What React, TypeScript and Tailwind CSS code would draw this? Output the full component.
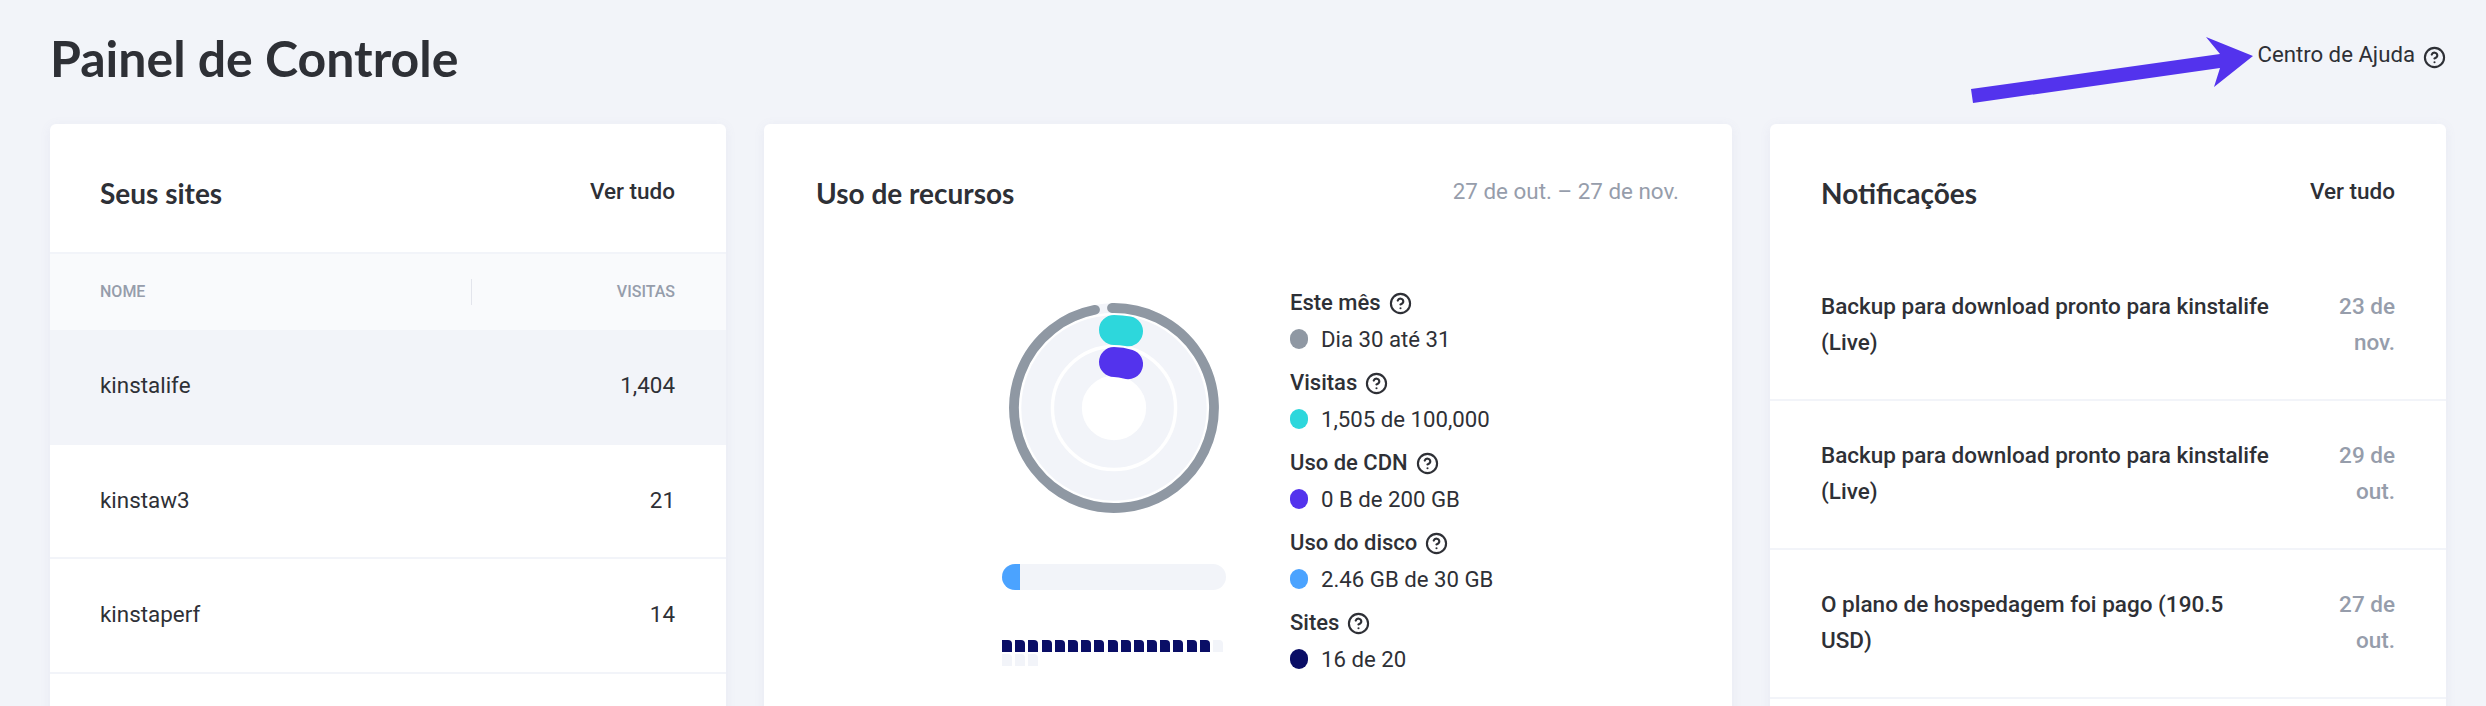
import React from "react";
import { CircleHelp } from "lucide-react";

const sites = [
  { name: "kinstalife", visits: "1,404", active: true },
  { name: "kinstaw3", visits: "21", active: false },
  { name: "kinstaperf", visits: "14", active: false },
];

const legend = [
  { title: "Este mês", value: "Dia 30 até 31", dot: "bg-[#8f98a3]" },
  { title: "Visitas", value: "1,505 de 100,000", dot: "bg-[#2dd7dc]" },
  { title: "Uso de CDN", value: "0 B de 200 GB", dot: "bg-[#5333ed]" },
  { title: "Uso do disco", value: "2.46 GB de 30 GB", dot: "bg-[#4ba3ff]" },
  { title: "Sites", value: "16 de 20", dot: "bg-[#0a0e66]" },
];

const notes = [
  { text: "Backup para download pronto para kinstalife (Live)", date: "23 de nov." },
  { text: "Backup para download pronto para kinstalife (Live)", date: "29 de out." },
  { text: "O plano de hospedagem foi pago (190.5 USD)", date: "27 de out." },
];

const heading = "font-['Lato',sans-serif] font-bold";

function Ring() {
  return (
    <svg width="224" height="224" viewBox="0 0 224 224" className="block">
      <circle cx="112" cy="112" r="100" fill="none" stroke="#f2f4f9" strokeWidth="9.5" />
      <circle cx="112" cy="112" r="78" fill="none" stroke="#f2f4f9" strokeWidth="29.4" />
      <circle cx="112" cy="112" r="46" fill="none" stroke="#f2f4f9" strokeWidth="27.7" />
      <path
        d="M 110 12 A 100 100 0 1 1 93 13.8"
        fill="none"
        stroke="#8f98a3"
        strokeWidth="9.8"
        strokeLinecap="round"
      />
      <path d="M 112 34 A 78 78 0 0 1 126 35.3" fill="none" stroke="#2dd7dc" strokeWidth="30" strokeLinecap="round" />
      <path d="M 112 66 A 46 46 0 0 1 126 68.2" fill="none" stroke="#5333ed" strokeWidth="30" strokeLinecap="round" />
    </svg>
  );
}

function Arrow() {
  return (
    <svg
      width="300"
      height="80"
      viewBox="0 0 300 80"
      className="absolute left-[1965px] top-[30px]"
    >
      <polygon points="6,59 8,73 255,38 249,57 288,26 241,7 255,24" fill="#5333ed" />
    </svg>
  );
}

export default function App() {
  return (
    <div className="relative h-[706px] w-[2486px] overflow-hidden bg-[#f2f4f9] font-['Roboto',sans-serif] text-[#2e3036]">
      <header className="flex h-[124px] items-start justify-between pl-[50px] pr-[40px]">
        <h1 className={`${heading} mt-[25px] text-[50px] leading-[66px] text-[#2e3036]`}>Painel de Controle</h1>
        <a className="mt-[39px] flex items-start gap-[8px] text-[22.2px] leading-[30px]">
          Centro de Ajuda
          <CircleHelp size={23} strokeWidth={2.2} className="mt-[7px]" />
        </a>
      </header>
      <Arrow />

      <main className="flex items-start gap-[38px] pl-[50px]">
        <section className="h-[600px] w-[676px] rounded-md bg-white shadow-[0_2px_12px_rgba(110,120,160,0.08)]">
          <div className="flex h-[128px] items-center justify-between pl-[50px] pr-[51px] pt-[10px]">
            <h2 className={`${heading} text-[28px] leading-9`}>Seus sites</h2>
            <span className="-mt-[2px] text-[22.5px] font-medium">Ver tudo</span>
          </div>
          <div className="flex h-[78px] items-center border-t-2 border-[#f2f4f9] bg-[#f9fafc] pl-[50px] pr-[51px] text-[16px] font-medium text-[#969dab]">
            <span className="w-[371px]">NOME</span>
            <span className="h-[26px] w-px bg-[#e3e5ec]" />
            <span className="ml-auto">VISITAS</span>
          </div>
          {sites.map((s) => (
            <div
              key={s.name}
              className={`flex h-[114.5px] items-center justify-between border-b-2 border-[#f2f4f9] pl-[50px] pr-[51px] text-[22.4px] ${
                s.active ? "bg-[#f2f4f9]" : "bg-white"
              }`}
            >
              <span>{s.name}</span>
              <span>{s.visits}</span>
            </div>
          ))}
        </section>

        <section className="h-[600px] w-[968px] rounded-md bg-white shadow-[0_2px_12px_rgba(110,120,160,0.08)]">
          <div className="flex h-[128px] items-center justify-between pl-[52px] pr-[53px] pt-[10px]">
            <h2 className={`${heading} text-[28px] leading-9`}>Uso de recursos</h2>
            <span className="-mt-[3px] text-[22.4px] text-[#969dab]">27 de out. – 27 de nov.</span>
          </div>
          <div className="flex items-start pl-[238px]">
            <div className="mt-[44px] w-[224px]">
              <Ring />
              <div className="mt-[44px] h-[26px] rounded-full bg-[#f2f4f9]">
                <div className="h-[26px] w-[18px] rounded-l-full rounded-r-[8px] bg-[#4ba3ff]" />
              </div>
              <div className="mt-[50px] flex flex-wrap gap-x-[3.2px] gap-y-[2px]">
                {Array.from({ length: 20 }, (_, i) => (
                  <span
                    key={i}
                    className={`h-[12px] w-[10px] rounded-tr-[4px] ${i < 16 ? "bg-[#0a0e66]" : "bg-[#f2f4f9]"}`}
                  />
                ))}
              </div>
            </div>
            <div className="ml-[64px] mt-[36px]">
              {legend.map((l) => (
                <div key={l.title} className="mb-[14px]">
                  <div className="flex h-[30px] items-center gap-[8px] text-[22px] font-medium leading-[30px]">
                    {l.title}
                    <CircleHelp size={23} strokeWidth={2.2} />
                  </div>
                  <div className="mt-[6px] flex h-[30px] items-center text-[22.2px] leading-[30px]">
                    <span className={`mr-[13px] h-[20px] w-[18px] rounded-full ${l.dot}`} />
                    {l.value}
                  </div>
                </div>
              ))}
            </div>
          </div>
        </section>

        <section className="h-[600px] w-[676px] rounded-md bg-white shadow-[0_2px_12px_rgba(110,120,160,0.08)]">
          <div className="flex h-[128px] items-center justify-between px-[51px] pt-[10px]">
            <h2 className={`${heading} text-[28px] leading-9`}>Notificações</h2>
            <span className="-mt-[2px] text-[22.5px] font-medium">Ver tudo</span>
          </div>
          {notes.map((n, i) => (
            <div
              key={i}
              className="flex items-start justify-between border-b-2 border-[#f2f4f9] px-[51px] pb-[39px] pt-[36px] text-[22.5px] font-medium leading-[36px]"
            >
              <span className="w-[450px]">{n.text}</span>
              <span className="w-[76px] text-right text-[#969dab]">{n.date}</span>
            </div>
          ))}
        </section>
      </main>
    </div>
  );
}
